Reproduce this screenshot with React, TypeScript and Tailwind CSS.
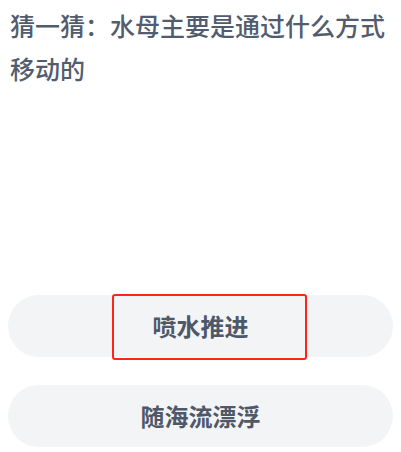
export default function App() {
  return (
    <div
      className="w-[401px] h-[452px] bg-white overflow-hidden"
      style={{ fontFamily: '"Noto Sans CJK SC", "Noto Sans", sans-serif' }}
    >
      <p className="pt-[4px] pl-[10px] pr-[8px] text-[25px] leading-[43px] font-medium text-[#525c6e]">
        猜一猜：水母主要是通过什么方式移动的
      </p>
      <div className="mt-[205px] flex flex-col gap-[28px] px-[8px]">
        <div className="relative h-[62px] rounded-full bg-[#f3f4f6] flex items-center justify-center">
          <span className="text-[24px] font-semibold text-[#4f5869]">喷水推进</span>
          <div className="absolute left-[104px] top-[-1px] w-[195px] h-[66px] border-[2.5px] border-[#ff2418] rounded-[3px]" />
        </div>
        <div className="h-[62px] rounded-full bg-[#f3f4f6] flex items-center justify-center">
          <span className="text-[24px] font-semibold text-[#4f5869]">随海流漂浮</span>
        </div>
      </div>
    </div>
  );
}
